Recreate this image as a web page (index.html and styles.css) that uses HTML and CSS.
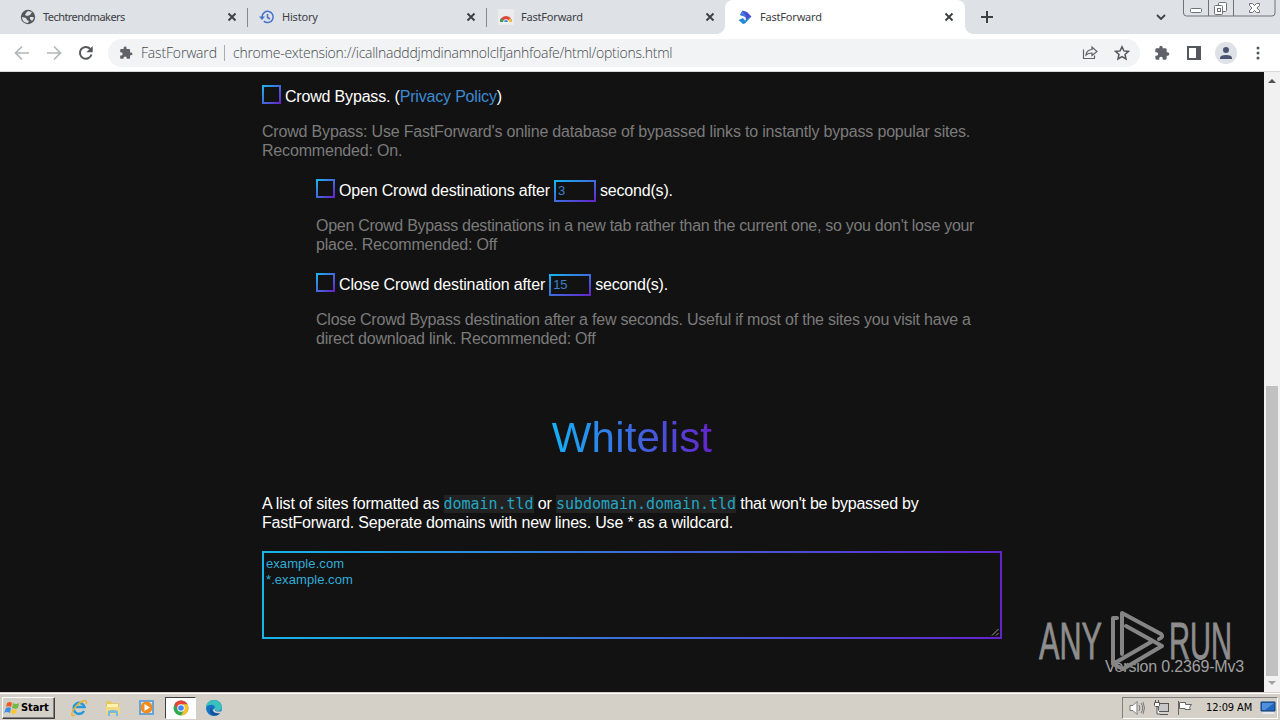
FILE: index.html
```html
<!DOCTYPE html>
<html lang="en">
<head>
    <meta charset="UTF-8">
    <meta name="viewport" content="width=device-width, initial-scale=1.0">
    <title>FastForward</title>
    <link rel="stylesheet" href="styles.css">
</head>
<body>

<svg width="0" height="0" class="defs">
    <symbol id="puzzle" viewBox="0 0 24 24"><path fill="#5f6368" d="M20.5 11H19V7a2 2 0 0 0-2-2h-4V3.5a2.5 2.5 0 0 0-5 0V5H4a2 2 0 0 0-2 2v3.8h1.5a2.7 2.7 0 0 1 0 5.4H2V20a2 2 0 0 0 2 2h3.8v-1.5a2.7 2.7 0 0 1 5.4 0V22H17a2 2 0 0 0 2-2v-4h1.5a2.5 2.5 0 0 0 0-5z"/></symbol>
    <symbol id="close" viewBox="0 0 10 10"><path d="M1.5 1.5l7 7m0-7l-7 7" stroke="#3c4043" stroke-width="1.9"/></symbol>
</svg>

<!-- Tabs -->
<div class="tabs">
    <div class="tab">
        <svg class="favicon" viewBox="0 0 16 16"><circle cx="8" cy="8" r="7.2" fill="#54585d"/><path d="M2 8l4 1 1 2 2 1-1 2C4 14 2 11 2 8zM8 2l4 1-2 3-3 1-2-1 1-2zM10 8l3 0 1 1-2 3-2-2z" fill="#dee1e6"/></svg>
        <span class="tab-title narrow">Techtrendmakers</span>
        <svg class="close"><use href="#close"/></svg>
    </div>
    <div class="tab line">
        <svg class="favicon" viewBox="0 0 16 16" fill="none" stroke="#4272c9" stroke-width="1.5"><path d="M3 8a5.6 5.6 0 1 1 1.8 4.1M8.5 5v3.5l2.5 1.5"/><path d="M0 7.5h6L3 11z" fill="#4272c9" stroke="none"/></svg>
        <span class="tab-title">History</span>
        <svg class="close"><use href="#close"/></svg>
    </div>
    <div class="tab line">
        <svg class="favicon" viewBox="0 0 16 16"><path fill="#ececec" d="M0 0h16v16H0z"/><path d="M2 13a6 6 0 0 1 12 0z" fill="#dc483b"/><path d="M2 13a6 6 0 0 1 1-4l4 4z" fill="#3b9b54"/><path d="M9 13l3-4a6 6 0 0 1 2 4z" fill="#f4c23b"/><circle cx="8" cy="13" r="2.8" fill="#fff"/><path d="M6 13a2 2 0 0 1 4 0z" fill="#4286ee"/><path fill="#ececec" d="M0 14h16v2H0z"/></svg>
        <span class="tab-title">FastForward</span>
        <svg class="close"><use href="#close"/></svg>
    </div>
    <div class="tab active">
        <svg class="favicon" viewBox="0 0 16 16"><path d="M5.5 1.5L10 3l4.500 4.500L9 11.500 8.500 8 3 6z" fill="#4450cf"/><path d="M5.5 1.5L9 7.500 3 6z" fill="#3c7fe0"/><path d="M1.5 11L6 9l2 2.500 6.500-4L8 14.500l-2 .5z" fill="#2689dc"/></svg>
        <span class="tab-title">FastForward</span>
        <svg class="close"><use href="#close"/></svg>
    </div>
    <svg class="new-tab" viewBox="0 0 12 12"><path d="M6 0v12M0 6h12" stroke="#3c4043" stroke-width="2"/></svg>
    <svg class="tab-search" viewBox="0 0 10 6"><path d="M1 1l4 4 4-4" fill="none" stroke="#3c4043" stroke-width="1.8"/></svg>
    <svg class="window-buttons" viewBox="0 0 94 18" fill="none" stroke="#6f7278">
        <path d="M.5 0v13q0 3 3 3H89q3 0 3-3V0M25.500 0v16M50.500 0v16"/>
        <rect x="7.5" y="8.5" width="11" height="4" rx="1" fill="#fff"/>
        <rect x="35.5" y="2.5" width="8" height="9" rx="1" fill="#fff"/>
        <rect x="31.5" y="5.5" width="8" height="9" rx="1" fill="#fff"/><rect x="34.5" y="8.5" width="3" height="3"/>
        <path d="M66.5 3.500h3l2 2 2-2h3v2l-2.500 2.500 2.500 2.500v2h-3l-2-2-2 2h-3v-2l2.500-2.500-2.500-2.500z" fill="#fff"/>
    </svg>
</div>

<!-- Toolbar -->
<div class="toolbar">
    <svg class="nav" viewBox="0 0 16 16" fill="none" stroke="#b4b6b9" stroke-width="1.7"><path d="M15 8H2M8 1.500L1.500 8 8 14.500"/></svg>
    <svg class="nav" viewBox="0 0 16 16" fill="none" stroke="#b4b6b9" stroke-width="1.7"><path d="M1 8h13M8 1.500L14.500 8 8 14.500"/></svg>
    <svg class="nav" viewBox="0 0 16 16"><path d="M13.5 9.500A5.900 5.900 0 1 1 12.300 4" fill="none" stroke="#54585d" stroke-width="2"/><path d="M14.7 1v6.300H8.400z" fill="#54585d"/></svg>
    <div class="omnibox">
        <svg class="site-icon"><use href="#puzzle"/></svg>
        <span class="site-name">FastForward</span>
        <span class="divider"></span>
        <span class="url">chrome-extension://icallnadddjmdinamnolclfjanhfoafe/html/options.html</span>
        <svg class="share" viewBox="0 0 16 16" fill="none" stroke="#5f6368" stroke-width="1.2"><path d="M1.5 4.500v9h11v-3"/><path d="M4 10q.5-5 6-5.500V2l5 4.500-5 4V8Q6 8 4 10z"/></svg>
        <svg class="star" viewBox="0 0 16 16"><path d="M8 1.800l1.900 4.100 4.500.5-3.400 3 1 4.500-4-2.300-4 2.300 1-4.500-3.400-3 4.500-.5z" fill="none" stroke="#54585d" stroke-width="1.5"/></svg>
    </div>
    <svg class="ext"><use href="#puzzle"/></svg>
    <svg class="panel" viewBox="0 0 14 14"><path d="M0 0h14v14H0zM2 2v10h7V2z" fill="#54585d" fill-rule="evenodd"/></svg>
    <svg class="avatar" viewBox="0 0 22 22"><circle cx="11" cy="11" r="11" fill="#dee1e6"/><circle cx="11" cy="8" r="3" fill="#4a5470"/><path d="M5 17v-1q0-3 6-3t6 3v1z" fill="#4a5470"/></svg>
    <svg class="menu" viewBox="0 0 4 14" fill="#54585d"><circle cx="2" cy="2" r="1.5"/><circle cx="2" cy="7" r="1.5"/><circle cx="2" cy="12" r="1.5"/></svg>
</div>

<!-- Options page -->
<div class="page">
    <div class="content">
        <div class="option">
            <span class="checkbox"></span>
            <label>Crowd Bypass. (<a>Privacy Policy</a>)</label>
        </div>
        <p class="hint">Crowd Bypass: Use FastForward's online database of bypassed links to instantly bypass popular sites.<br>Recommended: On.</p>

        <div class="sub">
            <div class="option">
                <span class="checkbox"></span>
                <label>Open Crowd destinations after</label>
                <span class="number">3</span>
                <label>second(s).</label>
            </div>
            <p class="hint hint-open">Open Crowd Bypass destinations in a new tab rather than the current one, so you don't lose your<br><span class="last-line">place. Recommended: Off</span></p>
            <div class="option">
                <span class="checkbox"></span>
                <label class="label-close">Close Crowd destination after</label>
                <span class="number">15</span>
                <label>second(s).</label>
            </div>
            <p class="hint hint-close">Close Crowd Bypass destination after a few seconds. Useful if most of the sites you visit have a<br>direct download link. Recommended: Off</p>
        </div>

        <h1>Whitelist</h1>
        <p class="about">A list of sites formatted as <code>domain.tld</code> or <code>subdomain.domain.tld</code> <span class="tail">that won't be bypassed by</span><br>FastForward. Seperate domains with new lines. Use * as a wildcard.</p>
        <div class="whitelist">example.com<br>*.example.com
            <svg class="grip" viewBox="0 0 8 8"><path d="M1 7.500L7.500 1M5 7.500L7.500 5" stroke="#bbb" stroke-width=".8"/></svg>
        </div>
    </div>
    <div class="scrollbar">
        <svg viewBox="0 0 8 4"><path d="M0 4l4-4 4 4z" fill="#505050"/></svg>
        <div class="thumb"></div>
        <svg viewBox="0 0 8 4"><path d="M0 0h8L4 4z" fill="#a3a3a3"/></svg>
    </div>
    <span class="version">Version 0.2369-Mv3</span>
    <svg class="watermark" viewBox="0 0 194 64">
        <g class="brand">
            <text x="1" y="50" textLength="63" lengthAdjust="spacingAndGlyphs">ANY</text>
            <text x="131" y="50" textLength="63" lengthAdjust="spacingAndGlyphs">RUN</text>
        </g>
        <g fill="none" stroke="#858585" stroke-width="4" stroke-linejoin="round" stroke-linecap="round">
            <path d="M79 9h-4v45M84 45V4l39 21q3 3-2 5"/>
            <path d="M88 17l36 20-39 23-10-5 38-22"/>
        </g>
    </svg>
</div>

<!-- Taskbar -->
<div class="taskbar">
    <div class="start">
        <svg viewBox="0 0 16 16"><path d="M3 3q3-2 5 0L7 7Q4 5.500 2 7z" fill="#ef5a28"/><path d="M9 3q3 2 6 0l-1 5q-3 1.500-6 0z" fill="#75b843"/><path d="M2 8q3-1.500 5 0l-1 5q-3-2-6 0z" fill="#3f8ee0"/><path d="M8 9q2 1.500 5 0l-1 4q-3 2-5 0z" fill="#fcc72c"/></svg>
        <span>Start</span>
    </div>
    <div class="apps">
        <svg class="app" viewBox="0 0 18 18" fill="none"><path d="M14 12a5.500 5.500 0 1 1 .5-4H5" stroke="#2699dc" stroke-width="2.5"/><path d="M5 16Q1 18 2 14 5 6 13 2q5-1 3 3" stroke="#e6b52e" stroke-width="1.5"/></svg>
        <svg class="app" viewBox="0 0 18 18"><path d="M2 2h5l1 2h7v11H2z" fill="#e5c766"/><path d="M3 5h11v5H3z" fill="#fff2af"/><path d="M2 8h14v7H2z" fill="#efd983"/><path d="M4 17v-5q5-2 10 0v5h-2v-3H6v3z" fill="#75b9de"/></svg>
        <svg class="app" viewBox="0 0 18 18"><rect x="1" y="1" width="15" height="15" fill="#69a3d6"/><rect x="3" y="3" width="11" height="11" fill="#d7e8f7"/><circle cx="8.5" cy="8.5" r="6" fill="#f18b1d"/><path d="M6.5 5v7l5.500-3.500z" fill="#fff"/></svg>
        <div class="app-active">
            <svg class="app" viewBox="0 0 18 18"><circle cx="9" cy="9" r="7.5" fill="#33a853"/><path d="M2.5 5.300a7.500 7.500 0 0 1 13 0H9L6 11z" fill="#e94435"/><path d="M15.5 5.300A7.500 7.500 0 0 1 9 16.500L12 11 11 5.300z" fill="#fbc02d"/><circle cx="9" cy="9" r="3.7" fill="#fff"/><circle cx="9" cy="9" r="2.8" fill="#4285f4"/></svg>
        </div>
        <svg class="app" viewBox="0 0 18 18"><circle cx="9" cy="9" r="8" fill="#1674c5"/><path d="M1 9Q2 1 9 1q7 0 8 7 0 4-5 4-3-1-2-3 0-4-5-3Q2 6 1 9z" fill="#3bc1bd"/><path d="M7 7q-2 6 4 7 3 1 5-1-4 5-9 3-4-3 0-9z" fill="#164f9c"/><path d="M10 9q-1 3 2 3.500h5L16 14q-6 1-8-2 0-2 2-3z" fill="#d4d0c8"/></svg>
    </div>
    <div class="tray">
        <svg class="speaker" viewBox="0 0 16 16" fill="none" stroke="#777"><path d="M1 5.500h3l4-4v13l-4-4H1z" fill="#fff"/><path d="M10 5q2 3 0 6M12 3q3.500 5 0 10M14 2q3 6 0 12"/></svg>
        <svg class="network" viewBox="0 0 17 16" fill="#fff" stroke="#555"><rect x="5.5" y="3.5" width="10" height="8" fill="#c7c7c7"/><path d="M7 14.500h8M1.500 2.500h5v3l-1 1h-3l-1-1zM2.500 0v2M5.500 0v2M4 7v7h3"/></svg>
        <svg class="flag" viewBox="0 0 16 16" fill="#fff" stroke="#666"><path d="M1.5 1v14M2.500 2.500h6v2h6l-2 3 1 2H8v-1H2.500z"/></svg>
        <span class="clock">12:09 AM</span>
        <svg class="desktop" viewBox="0 0 16 14"><path d="M1 1h14v9H1z" fill="#2167bd" stroke="#173c77"/><path d="M2 2h12l-9 7H2z" fill="#508fdc"/><path d="M3 11h11l1 2H2z" fill="#e5e9ef"/></svg>
    </div>
</div>

</body>
</html>
```
FILE: styles.css
```css
* {
    box-sizing: border-box;
}

body {
    margin: 0;
    width: 1280px;
    height: 720px;
    overflow: hidden;
    background-color: #121212;
    font-family: 'Liberation Sans', Arial, sans-serif;
    display: flex;
    flex-direction: column;
}

svg {
    display: block;
    flex: none;
}

.defs {
    position: absolute;
}

/* Tabs */
.tabs {
    height: 34px;
    flex: none;
    display: flex;
    background-color: #dee1e6;
    padding-left: 8px;
}

.tab {
    width: 239px;
    height: 34px;
    padding: 0 10px 0 12px;
    display: flex;
    align-items: center;
    font: 11px 'Noto Sans', sans-serif;
    color: #3c4043;
}

.tab.line {
    background: linear-gradient(#85888d, #85888d) 0 8px / 1px 19px no-repeat;
}

.tab.active {
    width: 240px;
    padding-right: 11px;
    background-color: #fff;
    border-radius: 8px 8px 0 0;
    position: relative;
}

.tab.active::before,
.tab.active::after {
    content: '';
    position: absolute;
    bottom: 0;
    left: -8px;
    width: 8px;
    height: 8px;
    background: radial-gradient(circle at 0 0, transparent 7.5px, #fff 8px);
}

.tab.active::after {
    left: 240px;
    background: radial-gradient(circle at 100% 0, transparent 7.5px, #fff 8px);
}

.favicon {
    width: 16px;
    height: 16px;
}

.tab-title {
    flex: 1;
    padding: 0 0 2px 7px;
    letter-spacing: -0.2px;
}

.tab-title.narrow {
    letter-spacing: -0.55px;
}

.close {
    width: 10px;
    height: 10px;
}

.new-tab {
    width: 12px;
    height: 12px;
    margin: 11px 0 0 16px;
}

.tab-search {
    width: 10px;
    height: 6px;
    margin: 14px 17px 0 auto;
}

.window-buttons {
    width: 94px;
    height: 18px;
    margin-right: 3px;
}

/* Toolbar */
.toolbar {
    height: 38px;
    flex: none;
    display: flex;
    align-items: center;
    background-color: #fff;
    border-bottom: 1px solid #d5d7da;
    padding-left: 14px;
}

.nav {
    width: 16px;
    height: 16px;
    margin-right: 16px;
}

.nav:nth-child(3) {
    margin-right: 14px;
}

.omnibox {
    width: 1032px;
    height: 28px;
    border-radius: 14px;
    background-color: #f1f3f4;
    display: flex;
    align-items: center;
    padding: 0 10px 0 11px;
    font: 300 14px 'Open Sans', 'Noto Sans', sans-serif;
    color: #45494e;
}

.site-icon {
    width: 14px;
    height: 14px;
}

.site-name {
    width: 91px;
    padding-left: 8px;
    white-space: nowrap;
    letter-spacing: -0.17px;
}

.divider {
    width: 1px;
    height: 16px;
    margin-right: 8px;
    background-color: #a9acb0;
}

.url {
    flex: 1;
    white-space: nowrap;
    letter-spacing: -0.25px;
}

.share,
.star {
    width: 16px;
    height: 16px;
}

.star {
    margin-left: 16px;
}

.ext {
    width: 16px;
    height: 16px;
    margin-left: 14px;
}

.panel {
    width: 14px;
    height: 14px;
    margin-left: 17px;
}

.avatar {
    width: 22px;
    height: 22px;
    margin-left: 14px;
}

.menu {
    width: 4px;
    height: 14px;
    margin-left: 19px;
}

/* Page */
.page {
    height: 620px;
    flex: none;
    position: relative;
    display: flex;
    font-size: 16px;
    line-height: 19px;
    letter-spacing: -0.18px;
    color: #fff;
}

.content {
    width: 740px;
    margin: 0 262px;
    flex: none;
    padding-top: 9px;
    white-space: nowrap;
}

.option {
    height: 30px;
    display: flex;
    align-items: center;
}

.checkbox {
    width: 19px;
    height: 19px;
    margin: -4px 4px 0 0;
    border: 2px solid;
    border-image: linear-gradient(to bottom right, #1fb2ee, #6424cb) 1;
}

.number {
    width: 42px;
    height: 22px;
    margin: 2px 4px 0;
    padding-left: 2px;
    border: 2px solid;
    border-image: linear-gradient(to bottom right, #16b5f0, #6424cb) 1;
    color: #3b82c9;
    font-size: 13px;
    line-height: 18px;
    letter-spacing: -0.2px;
}

.option a {
    color: #3d8bd4;
}

.label-close {
    letter-spacing: -0.13px;
}

.hint {
    margin: 11px 0 15px;
    color: #7b7b7b;
}

.hint-open {
    letter-spacing: -0.285px;
}

.last-line {
    letter-spacing: -0.2px;
}

.hint-close {
    letter-spacing: -0.22px;
}

.sub {
    padding-left: 54px;
}

h1 {
    width: max-content;
    margin: 0 auto;
    padding-top: 51px;
    font-size: 42px;
    font-weight: normal;
    line-height: 48px;
    letter-spacing: 0.2px;
    background: linear-gradient(to right, #14b0f8, #6424cb);
    -webkit-background-clip: text;
    background-clip: text;
    color: transparent;
}

.about {
    margin: 32px 0 19px;
}

.tail {
    letter-spacing: -0.25px;
}

code {
    font: 15px 'DejaVu Sans Mono', monospace;
    line-height: 18px;
    letter-spacing: -0.03px;
    background-color: #222;
    color: #22a6c4;
}

.whitelist {
    position: relative;
    height: 88px;
    padding: 3px 2px;
    border: 2px solid;
    border-image: linear-gradient(to right, #16b5e8, #6424cb) 1;
    color: #31add8;
    font-size: 13px;
    line-height: 16px;
    letter-spacing: 0.07px;
}

.grip {
    position: absolute;
    right: 1px;
    bottom: 1px;
    width: 8px;
    height: 8px;
}

.version {
    position: absolute;
    right: 36px;
    top: 585px;
    color: #a0a0a0;
}

.watermark {
    position: absolute;
    left: 1038px;
    top: 537px;
    width: 194px;
    height: 64px;
    overflow: visible;
}

.brand {
    font-family: 'Liberation Sans Narrow', 'Liberation Sans', sans-serif;
    font-size: 52px;
    letter-spacing: 0;
    fill: #8d8d8d;
    stroke: #8d8d8d;
    stroke-width: 0.8px;
}

.scrollbar {
    width: 16px;
    background-color: #f1f1f1;
    display: flex;
    flex-direction: column;
    align-items: center;
    padding: 7px 0;
}

.scrollbar svg {
    width: 8px;
    height: 4px;
}

.thumb {
    width: 12px;
    height: 290px;
    margin: auto 0 5px;
    background-color: #c1c1c1;
}

/* Taskbar */
.taskbar {
    height: 28px;
    flex: none;
    display: flex;
    align-items: center;
    background-color: #d4d0c8;
    border-top: 1px solid #d4d0c8;
    box-shadow: inset 0 1px #fff;
}

.start {
    width: 53px;
    height: 22px;
    margin: 2px 0 0 2px;
    display: flex;
    align-items: center;
    border: 1px solid;
    border-color: #fff #404040 #404040 #fff;
    box-shadow: inset -1px -1px #808080;
    font: bold 11px 'DejaVu Sans Condensed', 'DejaVu Sans', sans-serif;
    letter-spacing: -0.1px;
    color: #000;
}

.start svg {
    width: 16px;
    height: 16px;
    margin: 0 1px;
}

.apps {
    display: flex;
    align-items: center;
    padding: 2px 0 0 15px;
    gap: 16px;
}

.app {
    width: 18px;
    height: 18px;
}

.app-active {
    width: 31px;
    height: 22px;
    margin: 0 -7px;
    padding: 1px 0 0 6px;
    background-color: #fff;
    border: 1px solid;
    border-color: #404040 #fff #fff #404040;
}

.tray {
    width: 156px;
    height: 22px;
    margin: 2px 2px 0 auto;
    padding-left: 6px;
    display: flex;
    align-items: center;
    border: 1px solid;
    border-color: #808080 #fff #fff #808080;
    font: 11px 'DejaVu Sans Condensed', 'DejaVu Sans', sans-serif;
    color: #000;
}

.speaker {
    width: 16px;
    height: 16px;
}

.network {
    width: 17px;
    height: 16px;
    margin-left: 8px;
}

.flag {
    width: 16px;
    height: 16px;
    margin-left: 7px;
}

.clock {
    width: 54px;
    margin-left: 13px;
    letter-spacing: -0.1px;
    white-space: nowrap;
}

.desktop {
    width: 16px;
    height: 14px;
}
```
